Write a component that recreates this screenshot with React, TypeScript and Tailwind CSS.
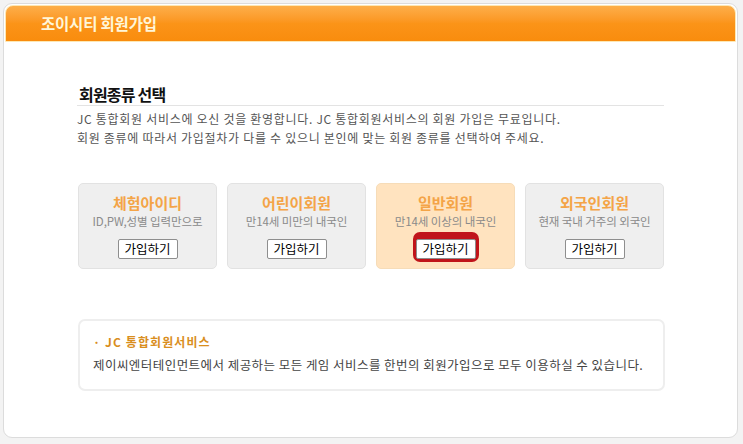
import React from "react";

const font = { fontFamily: '"Noto Sans CJK KR", "Noto Sans", sans-serif' };

interface MemberType {
  title: string;
  desc: string;
  active?: boolean;
}

const types: MemberType[] = [
  { title: "체험아이디", desc: "ID,PW,성별 입력만으로" },
  { title: "어린이회원", desc: "만14세 미만의 내국인" },
  { title: "일반회원", desc: "만14세 이상의 내국인", active: true },
  { title: "외국인회원", desc: "현재 국내 거주의 외국인" },
];

function TypeCard({ item }: { item: MemberType }) {
  return (
    <div
      className={`flex h-[86px] w-[139px] flex-col items-center rounded-[5px] border pt-[10px] ${
        item.active ? "border-[#f6dcb8] bg-[#ffe3bf]" : "border-[#e2e2e2] bg-[#efefef]"
      }`}
    >
      <div className="text-[15px] font-bold leading-[18px] text-[#f4a447]">{item.title}</div>
      <div className="mt-[1px] text-[11.5px] leading-[16px] tracking-[-0.1px] text-[#8a8a8a]">{item.desc}</div>
      <div
        className={`mt-[3px] rounded-[7px] p-[3px] ${item.active ? "bg-[#c0141a]" : ""}`}
      >
        <button
          type="button"
          className="h-[20px] w-[60px] rounded-[2px] border border-[#8e8e8e] bg-white text-[12.5px] leading-[18px] text-black"
        >
          가입하기
        </button>
      </div>
    </div>
  );
}

export default function App() {
  return (
    <div className="h-[444px] w-[743px] bg-[#f3f3f3] p-[3px] pb-[6px]" style={font}>
      <div className="h-full w-[735px] overflow-hidden rounded-[9px] border border-[#dcdcdc] bg-white">
        <div className="m-[1px] flex h-[37px] items-center rounded-t-[8px] border border-[#fde8b5] bg-gradient-to-b from-[#fdae48] via-[#fb9418] to-[#f98c0d] pl-[35px]">
          <span className="text-[15.5px] font-bold tracking-[-0.2px] text-[#fff6d8]">조이시티 회원가입</span>
        </div>

        <div className="px-[73px] pt-[41px]">
          <h2 className="border-b border-[#e3e3e3] pb-[1px] pl-[2px] text-[16px] font-bold leading-[20px] tracking-[-0.8px] text-[#111]">
            회원종류 선택
          </h2>
          <div className="mt-[3px] text-[12px] leading-[19px] tracking-[0.7px] text-[#555]">
            <p>JC 통합회원 서비스에 오신 것을 환영합니다. JC 통합회원서비스의 회원 가입은 무료입니다.</p>
            <p>회원 종류에 따라서 가입절차가 다를 수 있으니 본인에 맞는 회원 종류를 선택하여 주세요.</p>
          </div>

          <div className="mt-[36px] flex gap-[10px] pl-[1px]">
            {types.map((t) => (
              <TypeCard key={t.title} item={t} />
            ))}
          </div>

          <div className="mt-[50px] ml-[1px] w-[587px] rounded-[7px] border-2 border-[#eeeeee] px-[13px] pt-[13px] pb-[15px]">
            <div className="text-[12px] font-bold leading-[16px] tracking-[1.1px] text-[#d98e1e]">· JC 통합회원서비스</div>
            <div className="mt-[6px] text-[12.5px] leading-[18px] tracking-[0.45px] text-[#444]">
              제이씨엔터테인먼트에서 제공하는 모든 게임 서비스를 한번의 회원가입으로 모두 이용하실 수 있습니다.
            </div>
          </div>
        </div>
      </div>
    </div>
  );
}
